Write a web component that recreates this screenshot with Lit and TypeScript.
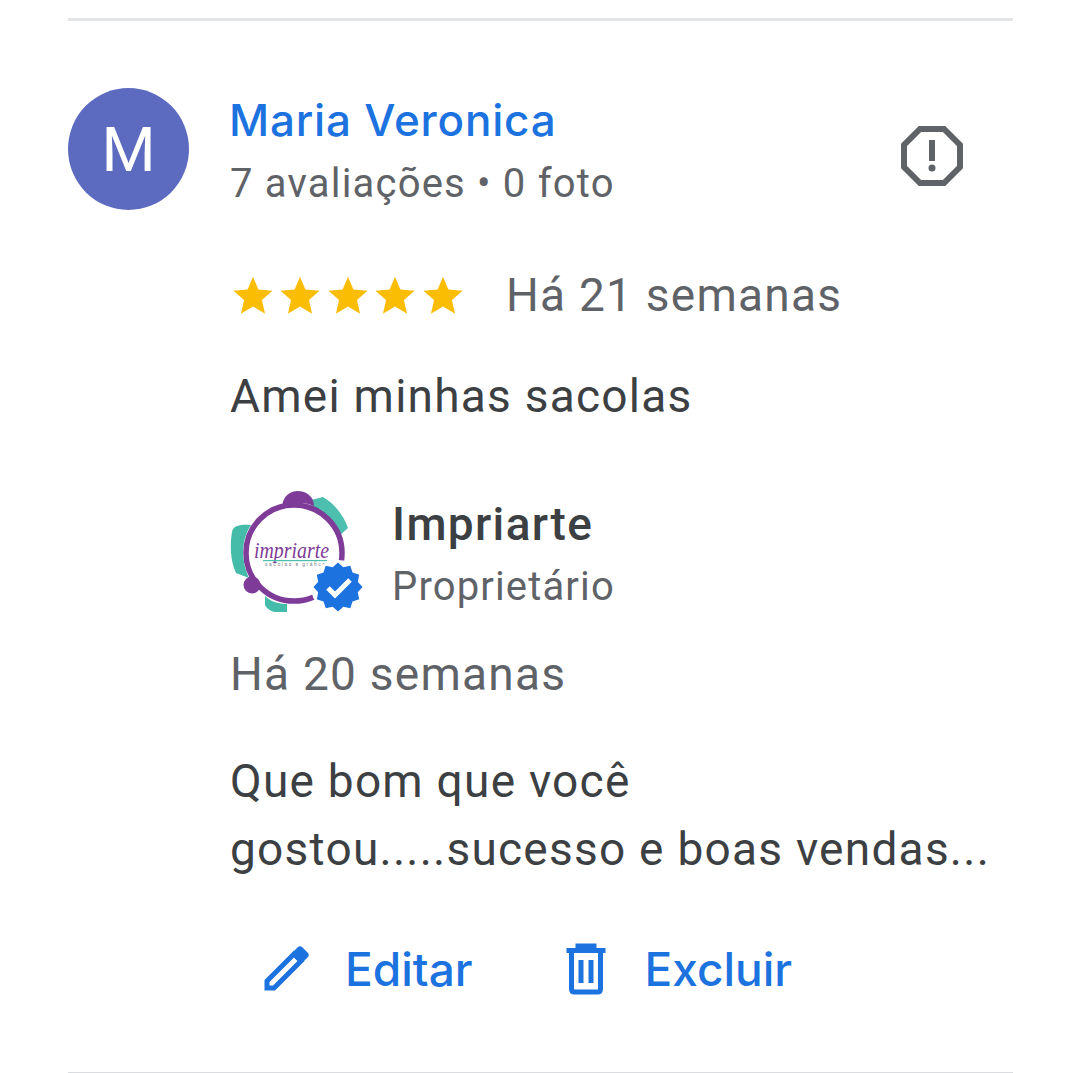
import { LitElement, html, css, svg } from "lit";
import { customElement } from "lit/decorators.js";

const star = html`<svg class="star" viewBox="0 0 24 24"><path d="M12 1.600l3.100 7.200 8.100.8-6.100 5.200 1.800 7.900L12 18.500l-6.900 4.200 1.800-7.900L.8 9.600l8.100-.8z" fill="#fbbc04"/></svg>`;

function badgePath(cx: number, cy: number, outer: number, inner: number, points: number) {
  let d = "";
  for (let i = 0; i < points * 2; i++) {
    const r = i % 2 === 0 ? outer : inner;
    const a = (Math.PI * i) / points - Math.PI / 2;
    d += `${i === 0 ? "M" : "L"}${(cx + r * Math.cos(a)).toFixed(1)} ${(cy + r * Math.sin(a)).toFixed(1)}`;
  }
  return d + "z";
}

@customElement("app-root")
export class AppRoot extends LitElement {
  static styles = css`
    :host { display: block; width: 1080px; height: 1073px; background: #fff; overflow: hidden; font-family: Roboto, "Noto Sans", sans-serif; color: #3c4043; }
    .card { box-sizing: border-box; height: 1073px; margin: 0 67px 0 68px; padding-top: 18px; display: flex; flex-direction: column; }
    .rule { height: 3px; background: #e3e4e6; flex: none; }
    .rule.bottom { height: 1px; margin-top: auto; background: #dadce0; }
    .head { display: flex; margin-top: 64px; }
    .avatar { width: 121px; height: 122px; margin-top: 3px; border-radius: 50%; background: #5c6bc0; color: #fff; font-size: 62px; display: flex; align-items: center; justify-content: center; flex: none; }
    .who { margin-left: 41px; flex: 1; }
    .name { font-family: Inter, Roboto, sans-serif; font-size: 44px; font-weight: 550; line-height: 52px; margin-top: 9px; margin-left: -1px; color: #1c72de; letter-spacing: 0.8px; }
    .sub { font-size: 40px; line-height: 50px; margin-top: 13px; color: #5f6368; letter-spacing: 1.2px; }
    .flag { width: 62px; height: 62px; margin: 40px 50px 0 1px; flex: none; }
    .body { margin-left: 162px; }
    .rating { display: flex; align-items: center; margin-top: 60px; height: 50px; }
    .stars { display: flex; gap: 5.500px; width: 274.400px; margin-left: 1.600px; }
    .star { width: 42px; height: 42px; flex: none; }
    .when { font-size: 46px; color: #5f6368; letter-spacing: 1.25px; line-height: 50px; }
    .text { font-size: 46px; line-height: 68px; color: #3c4043; letter-spacing: 1.25px; }
    .t1 { margin-top: 42px; }
    .owner { display: flex; margin-top: 58px; height: 122px; }
    .logo { width: 136px; height: 124px; margin-left: -3px; flex: none; }
    .owner-txt { margin-left: 29px; }
    .oname { font-size: 46px; font-weight: 500; line-height: 52px; margin-top: 10px; letter-spacing: 1.35px; }
    .orole { font-size: 40px; line-height: 50px; margin-top: 12px; color: #5f6368; letter-spacing: 1.15px; }
    .w2 { font-size: 46px; line-height: 50px; margin-top: 39px; color: #5f6368; letter-spacing: 1.25px; }
    .t2 { margin-top: 48px; }
    .actions { display: flex; margin-top: 54px; align-items: center; height: 64px; color: #1c72de; font-family: Inter, Roboto, sans-serif; font-size: 46px; font-weight: 550; }
    .pencil { width: 50px; height: 50px; margin-left: 31px; flex: none; }
    .trash { width: 46px; height: 52px; margin-left: 90px; flex: none; }
    .lbl1 { margin-left: 34px; }
    .lbl2 { margin-left: 36px; }
  `;

  render() {
    return html`<div class="card">
      <div class="rule"></div>
      <div class="head">
        <div class="avatar">M</div>
        <div class="who">
          <div class="name">Maria Veronica</div>
          <div class="sub">7 avaliações • 0 foto</div>
        </div>
        <svg class="flag" viewBox="0 0 62 62">
          <path d="M19 4h24l16 16v22L43 58H19L3 42V20z" fill="none" stroke="#5f6368" stroke-width="6"/>
          <rect x="28" y="15" width="6" height="21" fill="#5f6368"/>
          <circle cx="31" cy="43" r="3.500" fill="#5f6368"/>
        </svg>
      </div>
      <div class="body">
        <div class="rating">
          <div class="stars">${star}${star}${star}${star}${star}</div>
          <div class="when">Há 21 semanas</div>
        </div>
        <div class="text t1">Amei minhas sacolas</div>
        <div class="owner">
          <svg class="logo" viewBox="0 0 136 124">
            <path d="M84 12L96 9C108 16 117 28 121 40L112 48C106 36 96 24 84 20z" fill="#4dbfae"/>
            <path d="M24 37C12 36 6 38 5 44C3 56 3 72 9 85L22 90C14 72 14 52 24 37z" fill="#45bcaa"/>
            <path d="M38 108C44 114 52 116 60 116L60 124C52 125 42 125 38 117z" fill="#45bcaa"/>
            <circle cx="67" cy="65" r="48" fill="#fff" stroke="#7e3b98" stroke-width="5.500"/>
            <path d="M55 19C56 10 60 4 70 3C80 3 87 9 87 18C78 14 65 14 55 19z" fill="#7e3b98"/>
            <circle cx="25" cy="97" r="8.500" fill="#7e3b98"/>
            <text x="27" y="70" font-family="Liberation Serif, serif" font-style="italic" font-size="24" fill="#7e3b98" textLength="75" lengthAdjust="spacingAndGlyphs">impriarte</text>
            <rect x="36" y="72" width="64" height="1.200" fill="#4dbfae"/>
            <text x="38" y="78" font-family="Roboto, sans-serif" font-size="5" fill="#7a8a90" textLength="60">sacolas e gráfica</text>
            <circle cx="111" cy="99" r="27" fill="#fff"/>
            ${svg`<path d="${badgePath(111, 99, 24.500, 20.500, 12)}" fill="#1c72de"/>`}
            <path d="M101 100l7 7 15-15" fill="none" stroke="#fff" stroke-width="5"/>
          </svg>
          <div class="owner-txt">
            <div class="oname">Impriarte</div>
            <div class="orole">Proprietário</div>
          </div>
        </div>
        <div class="w2">Há 20 semanas</div>
        <div class="text t2">Que bom que você<br>gostou.....sucesso e boas vendas...</div>
        <div class="actions">
          <svg class="pencil" viewBox="0 0 50 50"><path d="M6 37L33 10l7 7-27 27H6z" fill="none" stroke="#1c72de" stroke-width="5"/><path d="M33 7l4-4c1-1 3-1 4 0l6 6c1 1 1 3 0 4l-4 4-4 2-9-9z" fill="#1c72de"/></svg>
          <span class="lbl1">Editar</span>
          <svg class="trash" viewBox="0 0 46 52"><path d="M3.500 7.500h39M15 6V3h16v3" stroke="#1c72de" stroke-width="5" fill="none"/><path d="M8.500 9v37c0 2 1 3 3 3h23c2 0 3-1 3-3V9" fill="none" stroke="#1c72de" stroke-width="5"/><rect x="15.500" y="17" width="5" height="23" fill="#1c72de"/><rect x="25.500" y="17" width="5" height="23" fill="#1c72de"/></svg>
          <span class="lbl2">Excluir</span>
        </div>
      </div>
      <div class="rule bottom"></div>
    </div>`;
  }
}
